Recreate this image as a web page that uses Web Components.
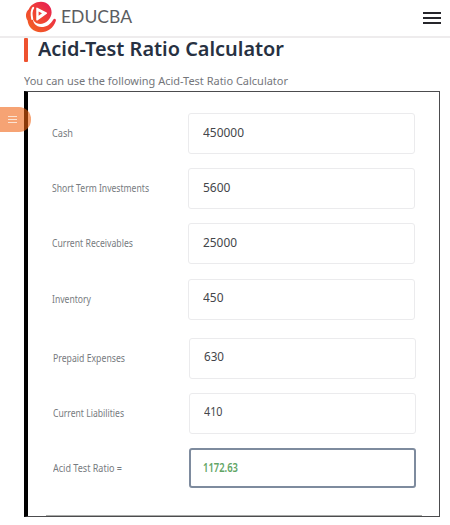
<!DOCTYPE html>
<html lang="en">
<head>
<meta charset="utf-8">
<title>Acid-Test Ratio Calculator</title>
<style>
  body {
    margin: 0;
    background: #fff;
    font-family: "Noto Sans", "Open Sans", sans-serif;
    overflow: hidden;
  }
</style>
</head>
<body>
<ratio-page></ratio-page>

<script>
// Text run condensed or widened to fill the given width
class FitText extends HTMLElement {
  constructor() {
    super();
    this.attachShadow({ mode: "open" });
  }

  connectedCallback() {
    this.shadowRoot.innerHTML = `
      <style>
        :host { display: inline-block; white-space: nowrap; line-height: 1; }
        span { display: inline-block; transform-origin: 0 50%; }
      </style>
      <span></span>
    `;
    const span = this.shadowRoot.querySelector("span");
    span.textContent = this.getAttribute("text");
    const target = Number(this.getAttribute("width"));
    const natural = span.getBoundingClientRect().width;
    this.style.width = `${target}px`;
    span.style.transform = `scaleX(${target / natural})`;
  }
}
customElements.define("fit-text", FitText);

class SiteHeader extends HTMLElement {
  constructor() {
    super();
    this.attachShadow({ mode: "open" }).innerHTML = `
      <style>
        :host {
          display: flex;
          align-items: center;
          justify-content: space-between;
          box-sizing: border-box;
          height: 38px;
          padding: 0 9px 3px 24px;
          border-bottom: 2px solid #eeeced;
        }
        .brand { display: flex; align-items: center; gap: 4px; }
        .logo { display: block; width: 33px; height: 33px; }
        .name {
          font-family: Lato, sans-serif;
          font-size: 17px;
          color: #5b5d61;
        }
        .menu { display: grid; gap: 3px; width: 18px; padding-top: 2px; }
        .menu i { height: 2px; background: #26262b; }
      </style>
      <div class="brand">
        <svg class="logo" viewBox="0 0 33 33">
          <defs>
            <linearGradient id="g" gradientUnits="userSpaceOnUse" x1="3" y1="30" x2="28" y2="5">
              <stop offset="0" stop-color="#f26322"/>
              <stop offset=".5" stop-color="#f04532"/>
              <stop offset="1" stop-color="#e71d54"/>
            </linearGradient>
          </defs>
          <path fill="url(#g)" d="M17 1.800C23 1.800 27.800 6.500 27.600 12.500C27.400 19 21.500 24.600 14.500 23.800C11 23.200 9 20.500 8.600 17.500C8.500 22.500 12 27 17.500 27C22.500 27 26.500 24.500 29.300 19.500C30.500 17.800 32.500 18.800 31.800 21C29.500 28 23.500 32.300 16.800 32.300C9.500 32.300 4 27 3.600 20.500C1.300 17.500 1.300 12 4.800 9.300C6.500 5 11.500 1.800 17 1.800Z"/>
          <path fill="none" stroke="#fff" stroke-width="2" stroke-linecap="round" stroke-linejoin="round" d="M8.200 19C7.300 14.500 7.500 10 9.200 7.800"/>
          <path fill="#fff" stroke="#fff" stroke-width="1.500" stroke-linejoin="round" d="M13 8.300L22.300 13.200L13 19.800Z"/>
          <path fill="url(#g)" d="M14.600 11.600L18 13.300L14.600 15.800Z"/>
        </svg>
        <fit-text class="name" text="EDUCBA" width="71"></fit-text>
      </div>
      <div class="menu"><i></i><i></i><i></i></div>
    `;
  }
}
customElements.define("site-header", SiteHeader);

class PageTitle extends HTMLElement {
  constructor() {
    super();
    this.attachShadow({ mode: "open" }).innerHTML = `
      <style>
        :host { display: block; height: 53px; padding-left: 24px; }
        .row { display: flex; align-items: center; gap: 10px; height: 24px; }
        .bar { width: 4px; height: 24px; border-radius: 1px; background: #ee5230; }
        h1 { margin: 0 0 2px; font-size: 20px; font-weight: 600; color: #273142; line-height: 1; }
        p { margin: 13px 0 0; font-size: 11.500px; color: #74767b; line-height: 1; }
      </style>
      <div class="row">
        <span class="bar"></span>
        <h1><fit-text text="Acid-Test Ratio Calculator" width="246"></fit-text></h1>
      </div>
      <p><fit-text text="You can use the following Acid-Test Ratio Calculator" width="264"></fit-text></p>
    `;
  }
}
customElements.define("page-title", PageTitle);

class CalcField extends HTMLElement {
  constructor() {
    super();
    this.attachShadow({ mode: "open" });
  }

  connectedCallback() {
    const attr = (name) => this.getAttribute(name);
    this.shadowRoot.innerHTML = `
      <style>
        :host {
          display: grid;
          grid-template-columns: 136px 227px;
          align-items: center;
          height: 41px;
        }
        .label { padding-bottom: 1px; font-size: 10px; color: #777b80; }
        .box {
          display: flex;
          align-items: center;
          box-sizing: border-box;
          height: 41px;
          padding: 0 0 2px 14px;
          border: 1px solid #ebebed;
          border-radius: 3px;
          font-size: 12px;
          color: #44464a;
        }
        :host([result]) .box {
          border: 2px solid #7e8b9e;
          height: 40px;
          padding: 0 0 0 12px;
          color: #62a565;
          font-weight: 600;
        }
      </style>
      <fit-text class="label" text="${attr("label")}" width="${attr("label-width")}"></fit-text>
      <div class="box"><fit-text text="${attr("value")}" width="${attr("value-width")}"></fit-text></div>
    `;
  }
}
customElements.define("calc-field", CalcField);

class CalcPanel extends HTMLElement {
  constructor() {
    super();
    this.attachShadow({ mode: "open" }).innerHTML = `
      <style>
        :host {
          display: flex;
          flex-direction: column;
          box-sizing: border-box;
          width: 416px;
          height: 426px;
          margin-left: 24px;
          padding: 21px 17px 0 18px;
          border: 1px solid #4c4c4e;
          border-left: 4px solid #000;
        }
        .group { display: grid; gap: 14.200px; padding-left: 6px; }
        .group + .group { margin-top: 18px; padding-left: 7px; }
        .rule { height: 1px; margin-top: auto; background: #a9aaa8; }
      </style>
      <div class="group"><slot name="assets"></slot></div>
      <div class="group"><slot></slot></div>
      <div class="rule"></div>
    `;
  }
}
customElements.define("calc-panel", CalcPanel);

// Side tab that lies over the panel's left border
class SideTab extends HTMLElement {
  constructor() {
    super();
    this.attachShadow({ mode: "open" }).innerHTML = `
      <style>
        :host {
          position: absolute;
          left: 0;
          top: 107px;
          display: flex;
          align-items: center;
          box-sizing: border-box;
          width: 31px;
          height: 25px;
          padding-left: 8px;
          border-radius: 0 12px 12px 0;
          background: rgba(240, 96, 16, .58);
        }
        .lines { display: grid; gap: 2px; width: 9px; }
        .lines i { height: 1px; background: #fbe3d3; }
      </style>
      <div class="lines"><i></i><i></i><i></i></div>
    `;
  }
}
customElements.define("side-tab", SideTab);

class RatioPage extends HTMLElement {
  constructor() {
    super();
    this.attachShadow({ mode: "open" }).innerHTML = `
      <style>
        :host { display: block; height: 525px; }
      </style>
      <site-header></site-header>
      <page-title></page-title>
      <calc-panel>
        <calc-field slot="assets" label="Cash" label-width="21" value="450000" value-width="41"></calc-field>
        <calc-field slot="assets" label="Short Term Investments" label-width="97" value="5600" value-width="27.5"></calc-field>
        <calc-field slot="assets" label="Current Receivables" label-width="81" value="25000" value-width="34"></calc-field>
        <calc-field slot="assets" label="Inventory" label-width="39" value="450" value-width="20.5"></calc-field>
        <calc-field label="Prepaid Expenses" label-width="72" value="630" value-width="20"></calc-field>
        <calc-field label="Current Liabilities" label-width="71" value="410" value-width="18.5"></calc-field>
        <calc-field result label="Acid Test Ratio =" label-width="69" value="1172.63" value-width="35"></calc-field>
      </calc-panel>
      <side-tab></side-tab>
    `;
  }
}
customElements.define("ratio-page", RatioPage);
</script>
</body>
</html>
